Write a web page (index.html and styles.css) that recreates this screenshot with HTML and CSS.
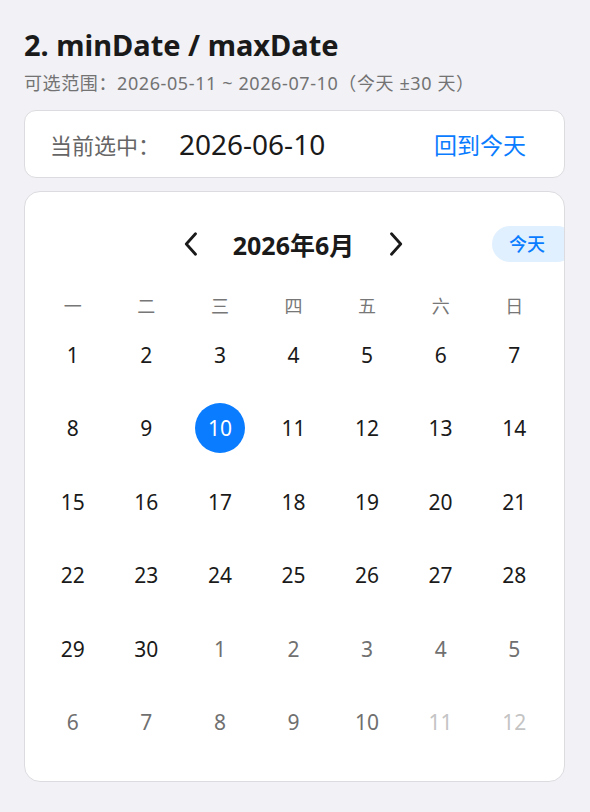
FILE: index.html
```html
<!DOCTYPE html>
<html lang="zh">
<head>
<meta charset="utf-8">
<link rel="stylesheet" href="styles.css">
</head>
<body>
<div class="page">
  <h1 class="title">2. minDate / maxDate</h1>
  <p class="subtitle">可选范围：2026-05-11 ~ 2026-07-10（今天 ±30 天）</p>
  <div class="info-card">
    <span class="info-label">当前选中：</span>
    <span class="info-value">2026-06-10</span>
    <span class="info-link">回到今天</span>
  </div>
  <div class="cal-card">
    <div class="cal-header">
      <span class="nav">
        <svg width="14" height="24" viewBox="0 0 14 24"><path d="M11.5 1.8 L2.3 12 L11.5 22.2" fill="none" stroke="#1a1a1a" stroke-width="2.8" stroke-linecap="round" stroke-linejoin="round"/></svg>
      </span>
      <span class="month">2026年6月</span>
      <span class="nav">
        <svg width="14" height="24" viewBox="0 0 14 24"><path d="M2.5 1.8 L11.7 12 L2.5 22.2" fill="none" stroke="#1a1a1a" stroke-width="2.8" stroke-linecap="round" stroke-linejoin="round"/></svg>
      </span>
      <span class="today-pill">今天</span>
    </div>
    <div class="weekdays">
      <span>一</span><span>二</span><span>三</span><span>四</span><span>五</span><span>六</span><span>日</span>
    </div>
    <div class="days">
      <span class="day">1</span><span class="day">2</span><span class="day">3</span><span class="day">4</span><span class="day">5</span><span class="day">6</span><span class="day">7</span>
      <span class="day">8</span><span class="day">9</span><span class="day"><b class="sel">10</b></span><span class="day">11</span><span class="day">12</span><span class="day">13</span><span class="day">14</span>
      <span class="day">15</span><span class="day">16</span><span class="day">17</span><span class="day">18</span><span class="day">19</span><span class="day">20</span><span class="day">21</span>
      <span class="day">22</span><span class="day">23</span><span class="day">24</span><span class="day">25</span><span class="day">26</span><span class="day">27</span><span class="day">28</span>
      <span class="day">29</span><span class="day">30</span><span class="day other">1</span><span class="day other">2</span><span class="day other">3</span><span class="day other">4</span><span class="day other">5</span>
      <span class="day other">6</span><span class="day other">7</span><span class="day other">8</span><span class="day other">9</span><span class="day other">10</span><span class="day disabled">11</span><span class="day disabled">12</span>
    </div>
  </div>
</div>
</body>
</html>
```
FILE: styles.css
```css
html, body {
  margin: 0;
  padding: 0;
  background: #f1f1f6;
}
body {
  font-family: "Noto Sans", "Noto Sans CJK SC", sans-serif;
  color: #1a1a1a;
}
.page {
  padding: 25px 25px 0 24px;
}
.title {
  margin: 0;
  font-size: 29px;
  font-weight: 700;
  line-height: 40px;
  color: #1a1a1a;
}
.subtitle {
  margin: 6px 0 0;
  font-size: 18px;
  line-height: 24px;
  letter-spacing: 0.6px;
  color: #737373;
}
.info-card {
  margin-top: 15px;
  height: 68px;
  box-sizing: border-box;
  background: #fff;
  border: 1px solid #dcdce0;
  border-radius: 12px;
  display: flex;
  align-items: center;
  padding: 0 38px 0 25px;
}
.info-label {
  font-size: 22px;
  color: #666;
  width: 129px;
}
.info-value {
  font-size: 28px;
  color: #1a1a1a;
  flex: 1;
}
.info-link {
  font-size: 23px;
  color: #0a7cff;
}
.cal-card {
  margin-top: 13px;
  background: #fff;
  border: 1px solid #dcdce0;
  border-radius: 16px;
  overflow: hidden;
  padding: 30px 13px 22px 11px;
}
.cal-header {
  position: relative;
  height: 44px;
  display: flex;
  align-items: center;
  justify-content: center;
  gap: 35px;
}
.nav {
  display: flex;
  width: 14px;
  height: 24px;
}
.month {
  font-size: 25px;
  font-weight: 700;
  color: #1a1a1a;
}
.today-pill {
  position: absolute;
  right: -24px;
  top: 4px;
  width: 83px;
  height: 36px;
  box-sizing: border-box;
  padding-left: 17px;
  border-radius: 18px;
  background: #e1f0ff;
  color: #0a7cff;
  font-size: 18px;
  font-weight: 500;
  line-height: 36px;
}
.weekdays {
  margin-top: 26px;
  display: grid;
  grid-template-columns: repeat(7, 1fr);
  height: 26px;
  align-items: center;
  text-align: center;
  font-size: 18px;
  color: #777;
}
.days {
  display: grid;
  grid-template-columns: repeat(7, 1fr);
  grid-auto-rows: 73.5px;
}
.day {
  display: flex;
  align-items: center;
  justify-content: center;
  font-size: 21px;
  color: #1a1a1a;
}
.day.other {
  color: #707070;
}
.day.disabled {
  color: #c4c4c4;
}
.sel {
  font-weight: 400;
  width: 50px;
  height: 50px;
  border-radius: 50%;
  background: #0a7cff;
  color: #fff;
  display: flex;
  align-items: center;
  justify-content: center;
}
```
